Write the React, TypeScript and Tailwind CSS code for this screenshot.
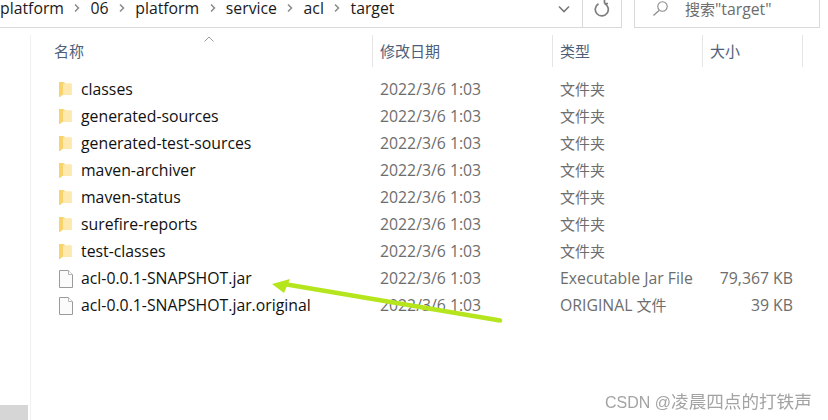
const FONT = 'font-["Open_Sans","Noto_Sans_CJK_SC",sans-serif]';

const rows = [
  { name: "classes", type: "文件夹", size: "", kind: "folder" },
  { name: "generated-sources", type: "文件夹", size: "", kind: "folder" },
  { name: "generated-test-sources", type: "文件夹", size: "", kind: "folder" },
  { name: "maven-archiver", type: "文件夹", size: "", kind: "folder" },
  { name: "maven-status", type: "文件夹", size: "", kind: "folder" },
  { name: "surefire-reports", type: "文件夹", size: "", kind: "folder" },
  { name: "test-classes", type: "文件夹", size: "", kind: "folder" },
  { name: "acl-0.0.1-SNAPSHOT.jar", type: "Executable Jar File", size: "79,367 KB", kind: "file" },
  { name: "acl-0.0.1-SNAPSHOT.jar.original", type: "ORIGINAL", size: "39 KB", kind: "file" },
];

const crumbs = ["platform", "06", "platform", "service", "acl", "target"];

function FolderIcon() {
  return (
    <svg width="13" height="17" viewBox="0 0 13 17" className="shrink-0">
      <path d="M0 1h5l1 1.500H12.500V14H2L0 16z" fill="#fbdc83" />
      <path d="M4 3h8.500v11H1.500L4 13z" fill="#fde9ae" />
      <path d="M0 1h4v12.500L1 16H0z" fill="#f8d36c" />
    </svg>
  );
}

function FileIcon() {
  return (
    <svg width="14" height="18" viewBox="0 0 14 18" className="shrink-0">
      <path d="M.5.500h9l4 4v13H.5z" fill="#fbfbfb" stroke="#9a9a9a" />
      <path d="M9.500.500v4h4" fill="#fff" stroke="#b5b5b5" />
    </svg>
  );
}

function Chevron() {
  return (
    <svg width="8" height="10" viewBox="0 0 8 10" className="shrink-0">
      <path d="M2 1.500 5.500 5 2 8.500" fill="none" stroke="#8a8a8a" strokeWidth="1.500" />
    </svg>
  );
}

export default function App() {
  return (
    <div className={`relative w-[828px] h-[420px] overflow-hidden bg-white ${FONT}`}>
      {/* top bar */}
      <div className="flex h-[28px]">
        <div className="flex w-[622px] h-full items-center border-r border-b border-[#d9d9d9]">
          <div className="flex flex-1 items-center gap-[9.300px] pb-[11px] text-[15.800px] leading-[16px] text-[#1a1a1a]">
            {crumbs.map((c, i) => (
              <div key={i} className="flex items-center gap-[9.300px]">
                <span>{c}</span>
                {i < crumbs.length - 1 && <Chevron />}
              </div>
            ))}
          </div>
          <div className="flex h-full w-[36px] items-center justify-center pb-[9px]">
            <svg width="12" height="8" viewBox="0 0 12 8">
              <path d="M1 1.500 6 6.500 11 1.500" fill="none" stroke="#7a7a7a" strokeWidth="1.600" />
            </svg>
          </div>
          <div className="flex h-full w-[39px] items-center justify-center border-l border-[#d9d9d9] pb-[9px]">
            <svg width="16" height="18" viewBox="0 0 16 18">
              <path
                d="M10.500 3.500A6.500 6.500 0 1 1 4.500 3.800M10.500 3.500 10.500 0M10.500 3.500 14 3.500"
                fill="none"
                stroke="#7d7d7d"
                strokeWidth="1.700"
              />
            </svg>
          </div>
        </div>
        <div className="ml-[12px] flex w-[186px] h-full items-center border-l border-r border-b border-[#d9d9d9] pb-[10px]">
          <svg width="17" height="15" viewBox="0 0 17 15" className="ml-[17px]">
            <circle cx="10.500" cy="5.500" r="4.700" fill="none" stroke="#8a8a8a" strokeWidth="1.100" />
            <path d="M7 9.500 1.500 14.500" fill="none" stroke="#8a8a8a" strokeWidth="1.200" />
          </svg>
          <span className="ml-[16px] text-[15px] leading-[16px] text-[#6d6d6d]">
            搜索<span className="text-[15.800px]">"target"</span>
          </span>
        </div>
      </div>

      <div className="flex h-[392px]">
        {/* nav pane */}
        <div className="flex w-[31px] flex-col border-r border-[#f0f0f0] mt-[7px] h-[385px]">
          <div className="mt-auto h-[15px] w-[28px] bg-[#d6d6d6]" />
        </div>

        {/* list */}
        <div className="flex-1">
          <div className="relative mt-[7px] flex h-[32px] text-[15px] text-[#4c607a]">
            <div className="flex w-[342px] items-center border-r border-[#e5e5e5] pl-[23px]">名称</div>
            <div className="flex w-[180px] items-center border-r border-[#e5e5e5] pl-[7px]">修改日期</div>
            <div className="flex w-[150px] items-center border-r border-[#e5e5e5] pl-[7px]">类型</div>
            <div className="flex w-[100px] items-center border-r border-[#e5e5e5] pl-[7px]">大小</div>
            <svg width="10" height="6" viewBox="0 0 10 6" className="absolute left-[173px] top-[1px]">
              <path d="M.5 5.500 5 1 9.500 5.500" fill="none" stroke="#9a9a9a" />
            </svg>
          </div>
          <div className="mt-[9px] flex flex-col">
            {rows.map((r) => (
              <div key={r.name} className="flex h-[27px] items-center text-[15.800px]">
                <div className="flex w-[342px] items-center pl-[28px]">
                  <div className="flex w-[22px]">{r.kind === "folder" ? <FolderIcon /> : <FileIcon />}</div>
                  <span className="text-[#111]">{r.name}</span>
                </div>
                <div className="w-[180px] pl-[7px] text-[#6d6d6d]">2022/3/6 1:03</div>
                <div className="w-[150px] pl-[7px] text-[#6d6d6d]">
                  {r.kind === "folder" ? (
                    <span className="text-[15px]">{r.type}</span>
                  ) : r.type === "ORIGINAL" ? (
                    <>
                      {r.type} <span className="text-[15px]">文件</span>
                    </>
                  ) : (
                    r.type
                  )}
                </div>
                <div className="w-[90px] text-right text-[#6d6d6d]">{r.size}</div>
              </div>
            ))}
          </div>
        </div>
      </div>

      {/* annotation arrow */}
      <svg width="260" height="60" viewBox="0 0 260 60" className="absolute left-[260px] top-[270px]">
        <path d="M24 14 240 50.500" fill="none" stroke="#b5e61d" strokeWidth="4.500" strokeLinecap="round" />
        <path d="M12 14 30 9 24 23z" fill="#b5e61d" />
      </svg>

      {/* watermark */}
      <div className='absolute left-[605px] top-[391px] whitespace-nowrap font-["Liberation_Sans","Noto_Sans_CJK_SC",sans-serif] text-[16px] leading-[22px] text-[#a3a3a3] blur-[0.3px]'>
        CSDN @<span className="text-[17.600px]">凌晨四点的打铁声</span>
      </div>
    </div>
  );
}
